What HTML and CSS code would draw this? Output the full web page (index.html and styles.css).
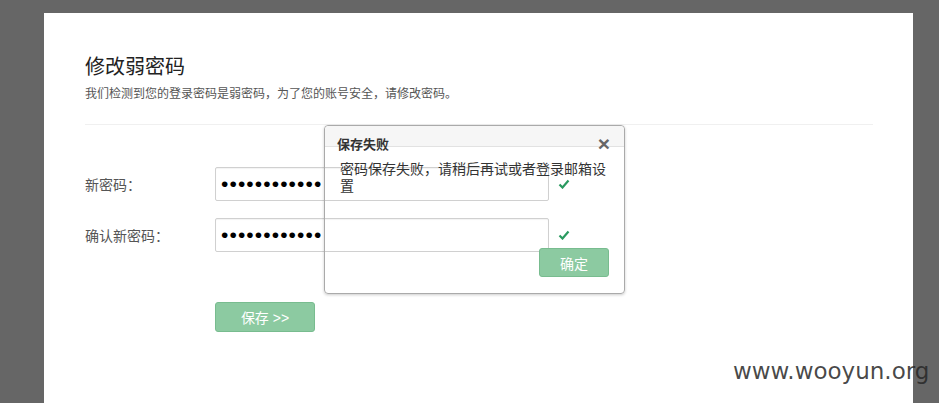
FILE: index.html
```html
<!DOCTYPE html>
<html lang="zh-CN">
<head>
    <meta charset="UTF-8">
    <title>修改弱密码</title>
    <link rel="stylesheet" href="styles.css">
</head>
<body>
    <div class="panel">
        <h2 class="title">修改弱密码</h2>
        <p class="tip">我们检测到您的登录密码是弱密码，为了您的账号安全，请修改密码。</p>
        <div class="line"></div>

        <div class="form">
            <div class="row">
                <label>新密码：</label>
                <input type="password" value="123456789012">
                <svg class="ok" width="12" height="10" viewBox="0 0 12 10"><path d="M1.5 5.5 L4.5 8.5 L10.5 1.5" fill="none" stroke="#2a9a60" stroke-width="2.2"/></svg>
            </div>
            <div class="row">
                <label>确认新密码：</label>
                <input type="password" value="123456789012">
                <svg class="ok" width="12" height="10" viewBox="0 0 12 10"><path d="M1.5 5.5 L4.5 8.5 L10.5 1.5" fill="none" stroke="#2a9a60" stroke-width="2.2"/></svg>
            </div>
            <div class="row">
                <label></label>
                <button class="btn save">保存 &gt;&gt;</button>
            </div>
        </div>
    </div>

    <!-- 提示框 -->
    <div class="dialog">
        <div class="dialog-head">
            <span class="dialog-title">保存失败</span>
            <span class="close">&times;</span>
        </div>
        <div class="dialog-body">密码保存失败，请稍后再试或者登录邮箱设置</div>
        <div class="dialog-foot">
            <button class="btn confirm">确定</button>
        </div>
    </div>

    <div class="mark">www.wooyun.org</div>
</body>
</html>
```

FILE: styles.css
```css
* {
    margin: 0;
    padding: 0;
    box-sizing: border-box;
}
body {
    background: #666666;
    font-family: "Liberation Sans", "Noto Sans CJK SC", sans-serif;
    color: #333;
    height: 403px;
    overflow: hidden;
    position: relative;
}
.panel {
    margin: 13px 0 0 44px;
    width: 869px;
    height: 390px;
    background: #fff;
    padding: 41px 40px 0 41px;
}
.title {
    font-size: 20px;
    font-weight: normal;
    line-height: 26px;
    color: #222;
}
.tip {
    margin-top: 5px;
    font-size: 12px;
    line-height: 18px;
    color: #555;
}
.line {
    margin-top: 21px;
    border-top: 1px solid #f0f0f0;
}
.form {
    margin-top: 42px;
}
.row {
    display: flex;
    align-items: center;
    margin-bottom: 17px;
}
.row label {
    width: 130px;
    font-size: 14px;
    color: #555;
}
.row input {
    width: 334px;
    height: 34px;
    border: 1px solid #d0d0d0;
    border-radius: 2px;
    padding: 0 5px;
    font-family: "Liberation Sans", sans-serif;
    font-size: 21px;
    letter-spacing: 1.1px;
    color: #000;
    box-shadow: inset 0 1px 1px rgba(0, 0, 0, 0.05);
}
.ok {
    margin-left: 9px;
}
.row:last-child {
    margin-top: 50px;
}
.btn {
    border: 1px solid #78bc8f;
    border-radius: 3px;
    background: #8ccaa1;
    color: #fff;
    font-family: "Liberation Sans", "Noto Sans CJK SC", sans-serif;
    font-size: 14px;
}
.save {
    width: 100px;
    height: 30px;
}
/* 提示框 */
.dialog {
    position: absolute;
    left: 324px;
    top: 125px;
    width: 301px;
    height: 169px;
    border: 1px solid #aaa;
    border-radius: 4px;
    box-shadow: 0 1px 3px rgba(0, 0, 0, 0.2);
}
.dialog-head {
    height: 21px;
    background: #f6f6f6;
    border-bottom: 1px solid #e2e2e2;
    border-radius: 4px 4px 0 0;
    position: relative;
}
.dialog-title {
    position: absolute;
    left: 12px;
    top: 8px;
    font-size: 13px;
    font-weight: bold;
    color: #333;
}
.close {
    position: absolute;
    right: 14px;
    top: 9px;
    font-size: 21px;
    line-height: 18px;
    font-weight: bold;
    color: #666;
}
.dialog-body {
    padding: 14px 14px 0 15px;
    font-size: 14px;
    line-height: 17px;
    color: #333;
}
.dialog-foot {
    display: flex;
    justify-content: flex-end;
    padding: 53px 15px 0 0;
}
.confirm {
    width: 70px;
    height: 29px;
}
.mark {
    position: absolute;
    left: 733px;
    top: 358px;
    font-family: "DejaVu Sans", sans-serif;
    font-size: 23px;
    color: rgba(40, 40, 40, 0.85);
}
```
